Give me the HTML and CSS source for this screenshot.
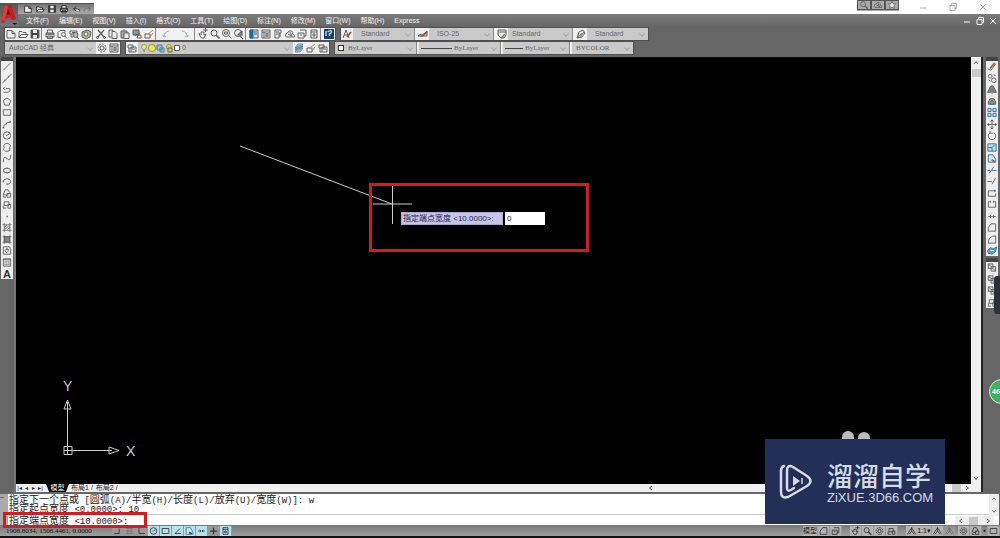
FILE: index.html
```html
<!DOCTYPE html>
<html lang="zh-CN">
<head>
<meta charset="utf-8">
<title>AutoCAD 经典</title>
<link rel="stylesheet" href="styles.css">
</head>
<body>
<svg class="defs" aria-hidden="true">
  <symbol id="new" viewBox="0 0 12 12"><path d="M2 2.500h5l3 3v4.500h-8z M7 2.500v3h3"/></symbol>
  <symbol id="open" viewBox="0 0 12 12"><path d="M2 9.500v-6h3l1 1h3v2M2 9.500l2-3h7l-2 3z"/></symbol>
  <symbol id="save" viewBox="0 0 12 12"><path d="M2 2h8v8h-8z" fill="#444"/><path d="M4 2h4v3h-4z M4 7h4v3h-4z" fill="#eee" stroke="none"/></symbol>
  <symbol id="print" viewBox="0 0 12 12"><path d="M3.500 5v-3h5v3M2 5h8v4h-8z M3.500 8v2.500h5v-2.500z"/><path d="M2 6h8" stroke-width="1.500"/></symbol>
  <symbol id="preview" viewBox="0 0 12 12"><path d="M5 9.500h-3v-5l2-2h5v2"/><circle cx="7.500" cy="6.500" r="2"/><path d="M9 8l2 2.500"/></symbol>
  <symbol id="publish" viewBox="0 0 12 12"><path d="M2 3h7v3h-7z M3 6v3h2"/><circle cx="7.500" cy="7" r="2.500" fill="#bbb"/><path d="M9 9l2 2M4 4.500h3"/></symbol>
  <symbol id="box3d" viewBox="0 0 12 12"><path d="M2 4l5-2 4 2-1 5-4 2-4-2z" fill="#bab78d"/><circle cx="6" cy="6" r="2" fill="#eee"/></symbol>
  <symbol id="cut" viewBox="0 0 12 12"><path d="M3 2l6 7M9 2l-6 7" stroke-width="1.300"/><circle cx="2.500" cy="9.500" r="1"/><circle cx="9.500" cy="9.500" r="1"/></symbol>
  <symbol id="copy" viewBox="0 0 12 12"><path d="M2 2h4v7h-4z"/><path d="M5 3.500h3l2 2v5h-5z" fill="#eee"/></symbol>
  <symbol id="paste" viewBox="0 0 12 12"><path d="M2 3h6v7h-6z" fill="#aaa"/><path d="M5 5h5v5.500h-5z" fill="#eee"/><path d="M4 2h2"/></symbol>
  <symbol id="match" viewBox="0 0 12 12"><path d="M2 2h6v5h-6z" fill="#8496a0"/><path d="M4 8l5-3M7 7h3v3h-4z" stroke="#75572b"/></symbol>
  <symbol id="blockedit" viewBox="0 0 12 12"><path d="M2 6h5v4h-5z"/><path d="M5 6l5-4M7 9l3-4" stroke="#b38b43"/></symbol>
  <symbol id="undo" viewBox="0 0 12 12"><path d="M3 6h5q3 0 2 3M3 6l3-3M3 6l3 2"/></symbol>
  <symbol id="redo" viewBox="0 0 12 12"><path d="M9 6h-5q-3 0-2 3M9 6l-3-3M9 6l-3 2"/></symbol>
  <symbol id="arcL" viewBox="0 0 12 12"><path d="M3 9q0-5 5-6M1.500 7l1.500 2 2-1" stroke="#aaa"/></symbol>
  <symbol id="arcR" viewBox="0 0 12 12"><path d="M8 9q0-5-5-6M6 8l2 1 1.500-2" stroke="#aaa"/></symbol>
  <symbol id="pan" viewBox="0 0 12 12"><path d="M2 5l1 3q1 3 4 2l2-4-2 1v-3h-3v3M6 2h5M8.500 0v4"/></symbol>
  <symbol id="zoom" viewBox="0 0 12 12"><circle cx="5" cy="5" r="3"/><path d="M7 7l3.500 3.500" stroke-width="1.700"/></symbol>
  <symbol id="zoomwin" viewBox="0 0 12 12"><circle cx="5" cy="5" r="3.500"/><path d="M3.500 4h3v2h-3z M7.500 7.500l3 3"/></symbol>
  <symbol id="zoomprev" viewBox="0 0 12 12"><circle cx="5" cy="5" r="3.500"/><path d="M7 8l3 3M9 3v4h-4l4-4" stroke-width="1.200"/></symbol>
  <symbol id="palette" viewBox="0 0 12 12"><path d="M2 2h8v8h-8z" fill="#ddd"/><path d="M2 2h3v8h-3z M6 4h3M6 6h3" fill="#26659a" stroke="#286b99"/></symbol>
  <symbol id="center" viewBox="0 0 12 12"><path d="M2 2h8v8h-8z M2 4h8M4 4v6M5 6h4M5 8h4M7 5v4"/></symbol>
  <symbol id="sheet" viewBox="0 0 12 12"><path d="M3 2h6v3h-2v5h-4z M4 4h3M4 6h2M8 5v4"/></symbol>
  <symbol id="markup" viewBox="0 0 12 12"><path d="M1.500 8q0-3 2-3q1-3 4-2q2 1 1 3q3 1 2 3h-8zM4 6l4 2M6 4l2 4"/></symbol>
  <symbol id="sheets" viewBox="0 0 12 12"><path d="M2 5h6v5h-6z M4 2h6v6h-2M4 7h2"/></symbol>
  <symbol id="calc" viewBox="0 0 12 12"><path d="M3 2h6v8h-6z M3 4h6M5 6h2v2h-2z"/></symbol>
  <symbol id="help" viewBox="0 0 12 12"><path d="M1.500 1.500h9v9h-9z" fill="#163f62" stroke="#163f62"/><path d="M4.500 4q4-3 4 0q0 1-2 2v2M3 3v5" stroke="#9cd8ef" stroke-width="1.500"/></symbol>
  <symbol id="astyle" viewBox="0 0 12 12"><path d="M2 10l3-8 3 8M3 7h4"/><path d="M6 9l4-5" stroke="#936137" stroke-width="2"/></symbol>
  <symbol id="dim" viewBox="0 0 12 12"><path d="M1 8h9M1 8l3-2v3M6 8l4-5v5"/><path d="M5 8l5-4" stroke="#9a4f34" stroke-width="2"/></symbol>
  <symbol id="tabstyle" viewBox="0 0 12 12"><path d="M2 2h8v5l-2 3h-3l-3-3zM2 4h8"/><path d="M5 10l4-4" stroke="#a46633" stroke-width="1.500"/></symbol>
  <symbol id="leader" viewBox="0 0 12 12"><path d="M2 10l2-6 4-2 2 3-3 4z M5 9l4-5"/><path d="M3 9l4-4" stroke="#936137"/></symbol>
  <symbol id="gear" viewBox="0 0 12 12"><circle cx="6" cy="6" r="4" stroke-dasharray="2 1"/><circle cx="6" cy="6" r="2"/></symbol>
  <symbol id="layers" viewBox="0 0 12 12"><path d="M2 3h5v3h-5z M3 6v4h2M5 5h5v5h-5z M6 7h3"/></symbol>
  <symbol id="layer2" viewBox="0 0 12 12"><path d="M2 6l3-4h5l-3 4z M2 8l3-4h5l-3 4z M2 10l3-4h5l-3 4z" fill="#b6d1df" stroke="#426d85" stroke-width=".7"/></symbol>
  <symbol id="line" viewBox="0 0 12 12"><path d="M2 10l8-8"/></symbol>
  <symbol id="xline" viewBox="0 0 12 12"><path d="M1 11l10-10"/><path d="M3 8h1M7 4h1" stroke-width="2"/></symbol>
  <symbol id="pline" viewBox="0 0 12 12"><path d="M2 9h5q4-1 2-4h-4M4 3l-2 2 2 1"/></symbol>
  <symbol id="poly" viewBox="0 0 12 12"><path d="M6 2l4 3-1.500 5h-5l-1.500-5z"/></symbol>
  <symbol id="rect" viewBox="0 0 12 12"><path d="M2 3h8v6h-8z"/></symbol>
  <symbol id="arc" viewBox="0 0 12 12"><path d="M2 10q1-6 8-7"/><path d="M2 9v1M5 5h1M9 3h1" stroke-width="2"/></symbol>
  <symbol id="circle" viewBox="0 0 12 12"><circle cx="6" cy="6" r="4"/><path d="M6 6l2.500-2M5 6h1"/></symbol>
  <symbol id="cloud" viewBox="0 0 12 12"><path d="M4 2q2-1 4 0q3 1 1 4q1 4-2 4q-3 1-4-1q-2-1 0-3q-2-2 1-4z"/></symbol>
  <symbol id="spline" viewBox="0 0 12 12"><path d="M2 10q0-8 4-4t4-4"/></symbol>
  <symbol id="ellipse" viewBox="0 0 12 12"><ellipse cx="6" cy="6" rx="4" ry="2.500"/><path d="M6 3v1M6 8v1M2 6h1M9 6h1" stroke-width="1.500"/></symbol>
  <symbol id="earc" viewBox="0 0 12 12"><path d="M2 6q0-3 4-3t4 3t-4 3M6 8v2M2 5v2"/></symbol>
  <symbol id="insert" viewBox="0 0 12 12"><path d="M2 7l2-5h3l2 3-3 3zM6 6h4v4h-4zM2 8v2h3"/></symbol>
  <symbol id="block" viewBox="0 0 12 12"><path d="M3 3h5v4h-5zM7 6h3v4h-3zM2 7v3h3"/></symbol>
  <symbol id="point" viewBox="0 0 12 12"><path d="M5.500 6h1.500" stroke-width="1.500"/></symbol>
  <symbol id="hatch" viewBox="0 0 12 12"><path d="M3 1v10M9 1v10M1 3h10M1 9h10M3 6l3-3M4 8l4-4M6 9l3-3" stroke-width=".8"/></symbol>
  <symbol id="gradient" viewBox="0 0 12 12"><path d="M3 3h6v6h-6z" fill="#888"/><path d="M1 3h10M1 9h10M3 1v10M9 1v10" stroke-width=".8"/></symbol>
  <symbol id="region" viewBox="0 0 12 12"><path d="M2 2h7l1 3v5h-8zM5 4q4 0 2 3t-3-1q0-2 3-1"/></symbol>
  <symbol id="table" viewBox="0 0 12 12"><path d="M2 2h8v8h-8zM2 3h8"/><path d="M2 5.500h8M2 8h8M5 4v6M8 4v6" stroke="#999"/></symbol>
  <symbol id="erase" viewBox="0 0 12 12"><path d="M2 9l3 1 5-7"/><path d="M4 8l5-6" stroke="#a56b3b" stroke-width="2"/></symbol>
  <symbol id="copyobj" viewBox="0 0 12 12"><circle cx="4" cy="3.500" r="2"/><circle cx="8" cy="8" r="2.500"/><path d="M8 2l2 1M2 7l2 2" stroke="#3788a5"/></symbol>
  <symbol id="mirror" viewBox="0 0 12 12"><path d="M5 2v7h-4zM7 2v7h4z" fill="#78929d"/><path d="M6 1v10"/></symbol>
  <symbol id="offset" viewBox="0 0 12 12"><path d="M2 9v-3l2-3h4l2 3v3zM4 9v-2l1-2h2l1 2v2z" fill="#8ba1a9"/></symbol>
  <symbol id="array" viewBox="0 0 12 12"><path d="M1.500 1.500h3.500v3.500h-3.500zM7 1.500h3.500v3.500h-3.500zM1.500 7h3.500v3.500h-3.500zM7 7h3.500v3.500h-3.500z" fill="#b8dded" stroke="#33748c"/></symbol>
  <symbol id="move" viewBox="0 0 12 12"><path d="M6 1v10M1 6h10M4.500 3l1.500-2 1.500 2M4.500 9l1.500 2 1.500-2M3 4.500l-2 1.500 2 1.500M9 4.500l2 1.500-2 1.500"/></symbol>
  <symbol id="rotate" viewBox="0 0 12 12"><path d="M4 3a4 4 0 1 0 4 0M4 1v2.500h3"/></symbol>
  <symbol id="scale" viewBox="0 0 12 12"><path d="M1.500 2h9v8h-9z" fill="#b8dded" stroke="#33748c"/><path d="M2 6h4v4M6 6l3-3" stroke="#33748c"/></symbol>
  <symbol id="stretch" viewBox="0 0 12 12"><path d="M2 10v-8h5l3 5v3z" fill="#d3e8f0" stroke="#33748c"/><path d="M6 7l3 2h-3z"/></symbol>
  <symbol id="trim" viewBox="0 0 12 12"><path d="M1 6h3M6 6h5" stroke="#33748c"/><path d="M3 9l5-7"/></symbol>
  <symbol id="extend" viewBox="0 0 12 12"><path d="M1 6h5" stroke="#33748c"/><path d="M6 9l4-7"/></symbol>
  <symbol id="breakpt" viewBox="0 0 12 12"><path d="M8 3h-6v6h8v-3"/><path d="M8 3h2" stroke="#25728b" stroke-width="2"/></symbol>
  <symbol id="break" viewBox="0 0 12 12"><path d="M4 3h-2v6h8v-6h-2"/><path d="M4 3h1M7 3h1" stroke-width="2"/></symbol>
  <symbol id="join" viewBox="0 0 12 12"><path d="M2 6h3M7 6h3M4 4.500l1.500 1.500-1.500 1.500M8 4.500l-1.500 1.500 1.500 1.500"/></symbol>
  <symbol id="chamfer" viewBox="0 0 12 12"><path d="M2 10v-4l3-4h5v8z"/></symbol>
  <symbol id="fillet" viewBox="0 0 12 12"><path d="M2 10q0-8 8-8v8z"/></symbol>
  <symbol id="explode" viewBox="0 0 12 12"><path d="M1 6l3-3 4 1 3-2-1 5-4 3-4-1z" fill="#54a5ba" stroke="#33748c"/><path d="M4 6h4" stroke="#ddd"/></symbol>
  <symbol id="order" viewBox="0 0 12 12"><path d="M2 2h5v5h-5zM5 5h5v5h-5z" fill="#ddd"/><path d="M2 2l3 3M7 7l3 3"/></symbol>
  <symbol id="snap" viewBox="0 0 12 12"><path d="M8 3v6h-6"/></symbol>
  <symbol id="grid" viewBox="0 0 12 12"><path d="M2 3h8M2 6h8M2 9h8M4 2v8M8 2v8" stroke="#777"/></symbol>
  <symbol id="ortho" viewBox="0 0 12 12"><path d="M3 2v7h7"/></symbol>
  <symbol id="angle" viewBox="0 0 12 12"><path d="M9 3l-6 6h7"/></symbol>
  <symbol id="star" viewBox="0 0 12 12"><path d="M6 1.500l1.300 3 3.200.3-2.400 2.200.8 3.200-2.900-1.700-2.900 1.700.8-3.200-2.400-2.200 3.200-.3z" fill="#eee"/></symbol>
  <symbol id="plus" viewBox="0 0 12 12"><path d="M6 2v8M2 6h8" stroke-width="1.500"/></symbol>
  <symbol id="min" viewBox="0 0 12 12"><path d="M3 7h6"/></symbol>
  <symbol id="max" viewBox="0 0 12 12"><path d="M3 4.500h5v5h-5zM4.500 4.500v-2h5v5h-1.500"/></symbol>
  <symbol id="close" viewBox="0 0 12 12"><path d="M3 3l6 6M9 3l-6 6"/></symbol>
  <symbol id="up" viewBox="0 0 12 12"><path d="M4 7l2-2.500 2 2.500"/></symbol>
  <symbol id="down" viewBox="0 0 12 12"><path d="M4 5l2 2.500 2-2.500"/></symbol>
  <symbol id="left" viewBox="0 0 12 12"><path d="M7 4l-2.500 2 2.500 2"/></symbol>
  <symbol id="right" viewBox="0 0 12 12"><path d="M5 4l2.500 2-2.500 2"/></symbol>
  <symbol id="scaleicon" viewBox="0 0 12 12"><path d="M1 10l5-8 5 8M3 10l3-4 3 4M6 2v4"/></symbol>
</svg>

<div class="app">
  <header class="titlebar">
    <button class="logo" aria-label="应用程序菜单"><svg viewBox="0 0 18 22"><path d="M1 18l4-17h6l5 14-4 1-2-3-5 2-1 4z" fill="#cf171d"/><path d="M5 1l3 1-3 14-4 2z" fill="#e23b36"/><path d="M8 5l2 5-3 1z" fill="#571012"/><path d="M12 19h5l-2 2z" fill="#111"/></svg></button>
    <div class="quick">
      <button aria-label="新建"><svg><use href="#new"/></svg></button><button aria-label="打开"><svg><use href="#open"/></svg></button><button aria-label="保存"><svg><use href="#save"/></svg></button><button aria-label="打印"><svg><use href="#print"/></svg></button><button aria-label="放弃"><svg><use href="#undo"/></svg></button><button class="faint" aria-label="重做"><svg><use href="#redo"/></svg></button>
    </div>
    <div class="info"><button aria-label="搜索"><svg><use href="#zoom"/></svg></button><button aria-label="通讯中心"><svg><use href="#markup"/></svg></button><button aria-label="收藏夹"><svg><use href="#star"/></svg></button></div>
    <div class="window"><button aria-label="最小化"><svg><use href="#min"/></svg></button><button aria-label="还原"><svg><use href="#max"/></svg></button><button aria-label="关闭"><svg><use href="#close"/></svg></button></div>
  </header>

  <nav class="menu">
    <a href="#">文件(F)</a><a href="#">编辑(E)</a><a href="#">视图(V)</a><a href="#">插入(I)</a><a href="#">格式(O)</a><a href="#">工具(T)</a><a href="#">绘图(D)</a><a href="#">标注(N)</a><a href="#">修改(M)</a><a href="#">窗口(W)</a><a href="#">帮助(H)</a><a href="#">Express</a>
    <div class="docwin"><button aria-label="最小化图形"><svg><use href="#min"/></svg></button><button aria-label="还原图形"><svg><use href="#max"/></svg></button><button aria-label="关闭图形"><svg><use href="#close"/></svg></button></div>
  </nav>

  <div class="toolbars">
    <div class="row">
      <div class="bar">
        <button aria-label="新建"><svg><use href="#new"/></svg></button><button aria-label="打开"><svg><use href="#open"/></svg></button><button aria-label="保存"><svg><use href="#save"/></svg></button><i></i>
        <button aria-label="打印"><svg><use href="#print"/></svg></button><button aria-label="预览"><svg><use href="#preview"/></svg></button><button aria-label="发布"><svg><use href="#publish"/></svg></button><button aria-label="三维"><svg><use href="#box3d"/></svg></button><i></i>
        <button aria-label="剪切"><svg><use href="#cut"/></svg></button><button aria-label="复制"><svg><use href="#copy"/></svg></button><button aria-label="粘贴"><svg><use href="#paste"/></svg></button><button aria-label="特性匹配"><svg><use href="#match"/></svg></button><button aria-label="块编辑器"><svg><use href="#blockedit"/></svg></button><i></i>
        <button class="wide" aria-label="放弃"><svg><use href="#arcL"/></svg></button><button class="wide" aria-label="重做"><svg><use href="#arcR"/></svg></button><i></i>
        <button aria-label="平移"><svg><use href="#pan"/></svg></button><button aria-label="缩放"><svg><use href="#zoom"/></svg></button><button aria-label="窗口缩放"><svg><use href="#zoomwin"/></svg></button><button aria-label="上一个"><svg><use href="#zoomprev"/></svg></button><i></i>
        <button aria-label="特性"><svg><use href="#palette"/></svg></button><button aria-label="设计中心"><svg><use href="#center"/></svg></button><button aria-label="工具选项板"><svg><use href="#sheet"/></svg></button><button aria-label="标记集"><svg><use href="#markup"/></svg></button><button aria-label="图纸集"><svg><use href="#sheets"/></svg></button><button aria-label="计算器"><svg><use href="#calc"/></svg></button><i></i>
        <button aria-label="帮助"><svg><use href="#help"/></svg></button>
      </div>
      <div class="bar">
        <button aria-label="文字样式"><svg><use href="#astyle"/></svg></button><label class="combo w60"><select class="in8" aria-label="文字样式"><option>Standard</option></select></label><i></i>
        <button aria-label="标注样式"><svg><use href="#dim"/></svg></button><label class="combo w64"><select class="in8" aria-label="标注样式"><option>ISO-25</option></select></label><i></i>
        <button aria-label="表格样式"><svg><use href="#tabstyle"/></svg></button><label class="combo w64"><select aria-label="表格样式"><option>Standard</option></select></label><i></i>
        <button aria-label="引线样式"><svg><use href="#leader"/></svg></button><label class="combo w60"><select class="in8" aria-label="引线样式"><option>Standard</option></select></label>
      </div>
    </div>
    <div class="row">
      <div class="bar"><label class="combo w90"><select aria-label="工作空间"><option>AutoCAD 经典</option></select></label><button aria-label="工作空间设置"><svg><use href="#gear"/></svg></button><button aria-label="我的工作空间"><svg><use href="#center"/></svg></button></div>
      <div class="bar"><button aria-label="图层特性"><svg><use href="#layers"/></svg></button>
        <label class="combo w156"><svg class="marks" viewBox="0 0 42 12"><circle cx="6" cy="5" r="2.500" fill="#e9e878" stroke="#a5a560"/><path d="M6 8v2"/><circle cx="14" cy="6" r="3.500" fill="#eced46" stroke="#99983e"/><path d="M19 3h5v5h-5zM22 6h4v4h-4z" fill="#96bed6" stroke="#568197"/><circle cx="31" cy="5" r="2.500" fill="#dfdb48" stroke="#98963c"/><path d="M30 6h4v4h-4z" fill="#d6d450"/><path d="M36.500 3.500h5v5h-5z" fill="#fff"/></svg><select class="layer" aria-label="图层"><option>0</option></select></label>
        <button aria-label="置为当前"><svg><use href="#layer2"/></svg></button><button aria-label="上一个图层"><svg><use href="#blockedit"/></svg></button><button aria-label="图层状态"><svg><use href="#layers"/></svg></button></div>
      <div class="bar props">
        <label class="combo w80"><span class="swatch"></span><select class="color" aria-label="颜色"><option>ByLayer</option></select></label><i></i>
        <label class="combo w80"><span class="stroke long"></span><select class="type" aria-label="线型"><option>ByLayer</option></select></label><i></i>
        <label class="combo w66"><span class="stroke"></span><select class="weight" aria-label="线宽"><option>ByLayer</option></select></label><i></i>
        <label class="combo w60"><select aria-label="打印样式"><option>BYCOLOR</option></select></label>
      </div>
    </div>
  </div>

  <main class="workspace">
    <aside class="side"><div class="grip"></div><div class="tools">
      <button aria-label="直线"><svg><use href="#line"/></svg></button><button aria-label="构造线"><svg><use href="#xline"/></svg></button><button aria-label="多段线"><svg><use href="#pline"/></svg></button><button aria-label="多边形"><svg><use href="#poly"/></svg></button><button aria-label="矩形"><svg><use href="#rect"/></svg></button><button aria-label="圆弧"><svg><use href="#arc"/></svg></button><button aria-label="圆"><svg><use href="#circle"/></svg></button><button aria-label="修订云线"><svg><use href="#cloud"/></svg></button><button aria-label="样条曲线"><svg><use href="#spline"/></svg></button><button aria-label="椭圆"><svg><use href="#ellipse"/></svg></button><button aria-label="椭圆弧"><svg><use href="#earc"/></svg></button><button aria-label="插入块"><svg><use href="#insert"/></svg></button><button aria-label="创建块"><svg><use href="#block"/></svg></button><button aria-label="点"><svg><use href="#point"/></svg></button><button aria-label="图案填充"><svg><use href="#hatch"/></svg></button><button aria-label="渐变色"><svg><use href="#gradient"/></svg></button><button aria-label="面域"><svg><use href="#region"/></svg></button><button aria-label="表格"><svg><use href="#table"/></svg></button><button class="mtext" aria-label="多行文字">A</button>
    </div></aside>

    <section class="drawing">
      <div class="view">
        <div class="canvas">
          <svg class="polyline" viewBox="0 0 400 170"><path d="M224 88L376 146M357 146h39M376.500 128v38"/></svg>
          <svg class="ucs" viewBox="0 0 90 90"><path d="M10.500 77v-47M14 78.500h41M7 74.500h8v8h-8zM10.500 74v8M7 78.500h8M10.500 28l3.500 9h-7zM62 78.500l-10-3.500v7z"/><text x="6" y="19">Y</text><text x="69" y="84">X</text></svg>
          <form class="prompt"><label for="width">指定端点宽度 &lt;10.0000&gt;:</label><input id="width" value="0"></form>
          <div class="callout"></div>
          <span class="blob first"></span><span class="blob"></span>
        </div>
        <div class="vscroll"><button aria-label="向上滚动"><svg><use href="#up"/></svg></button><span class="thumb"></span><button class="end" aria-label="向下滚动"><svg><use href="#down"/></svg></button></div>
      </div>
      <div class="tabs"><button aria-label="首个布局">|◂</button><button aria-label="上一布局">◂</button><button aria-label="下一布局">▸</button><button aria-label="末个布局">▸|</button><a href="#" class="active">模型</a><a href="#">布局1</a><span>/</span><a href="#">布局2</a><span>/</span><div class="hscroll"><button aria-label="向左滚动"><svg><use href="#left"/></svg></button><span class="thumb"></span><button aria-label="向右滚动"><svg><use href="#right"/></svg></button></div></div>
    </section>

    <aside class="side rightside"><div class="grip"></div><div class="tools">
      <button aria-label="删除"><svg><use href="#erase"/></svg></button><button aria-label="复制"><svg><use href="#copyobj"/></svg></button><button aria-label="镜像"><svg><use href="#mirror"/></svg></button><button aria-label="偏移"><svg><use href="#offset"/></svg></button><button aria-label="阵列"><svg><use href="#array"/></svg></button><button aria-label="移动"><svg><use href="#move"/></svg></button><button aria-label="旋转"><svg><use href="#rotate"/></svg></button><button aria-label="缩放"><svg><use href="#scale"/></svg></button><button aria-label="拉伸"><svg><use href="#stretch"/></svg></button><button aria-label="修剪"><svg><use href="#trim"/></svg></button><button aria-label="延伸"><svg><use href="#extend"/></svg></button><button aria-label="打断于点"><svg><use href="#breakpt"/></svg></button><button aria-label="打断"><svg><use href="#break"/></svg></button><button aria-label="合并"><svg><use href="#join"/></svg></button><button aria-label="倒角"><svg><use href="#chamfer"/></svg></button><button aria-label="圆角"><svg><use href="#fillet"/></svg></button><button aria-label="分解"><svg><use href="#explode"/></svg></button>
    </div><div class="grip second"></div><div class="tools"><button aria-label="前置"><svg><use href="#order"/></svg></button><button aria-label="后置"><svg><use href="#order"/></svg></button><button aria-label="置于对象之上"><svg><use href="#order"/></svg></button><button aria-label="置于对象之下"><svg><use href="#block"/></svg></button></div><span class="handle"></span><span class="ball">46</span></aside>
  </main>

  <section class="command">
    <div class="cmdgrip">–</div>
    <div class="history">
      <p>指定下一个点或<code> [</code>圆弧<code>(A)/</code>半宽<code>(H)/</code>长度<code>(L)/</code>放弃<code>(U)/</code>宽度<code>(W)]: w</code></p>
      <p>指定起点宽度<code> &lt;0.0000&gt;: 10</code></p>
      <p class="current">指定端点宽度<code> &lt;10.0000&gt;:</code></p>
      <div class="cmdcallout"></div>
    </div>
    <div class="cmdscroll"><button aria-label="历史向上"><svg><use href="#up"/></svg></button><button aria-label="历史向下"><svg><use href="#down"/></svg></button></div>
    <div class="cmdh"><button aria-label="命令向左"><svg><use href="#left"/></svg></button><span class="thumb"></span><button aria-label="命令向右"><svg><use href="#right"/></svg></button></div>
  </section>

  <footer class="status">
    <span class="coords">1908.8034, 1506.4461, 0.0000</span>
    <div class="toggles"><button aria-label="捕捉"><svg><use href="#snap"/></svg></button><button aria-label="栅格"><svg><use href="#grid"/></svg></button><button aria-label="正交"><svg><use href="#ortho"/></svg></button><button class="on" aria-label="极轴"><svg><use href="#circle"/></svg></button><button class="on" aria-label="对象捕捉"><svg><use href="#rect"/></svg></button><button class="on" aria-label="对象追踪"><svg><use href="#angle"/></svg></button><button class="on" aria-label="动态UCS"><svg><use href="#stretch"/></svg></button><button class="on" aria-label="动态输入"><svg><use href="#join"/></svg></button><button aria-label="线宽"><svg><use href="#plus"/></svg></button><button class="on" aria-label="快捷特性"><svg><use href="#calc"/></svg></button></div>
    <div class="right"><button class="model">模型</button><button aria-label="布局"><svg><use href="#chamfer"/></svg></button><button aria-label="快速查看"><svg><use href="#sheets"/></svg></button><span class="gap"></span><button aria-label="平移视图"><svg><use href="#pan"/></svg></button><button aria-label="缩放视图"><svg><use href="#zoom"/></svg></button><button aria-label="控制盘"><svg><use href="#gear"/></svg></button><button aria-label="运动"><svg><use href="#block"/></svg></button><span class="gap"></span><button class="ratio"><svg><use href="#scaleicon"/></svg>1:1▾</button><button aria-label="注释可见"><svg><use href="#scaleicon"/></svg></button><button class="faint" aria-label="自动缩放"><svg><use href="#scaleicon"/></svg></button><span class="gap small"></span><button aria-label="切换空间"><svg><use href="#gear"/></svg></button><button aria-label="锁定"><svg><use href="#insert"/></svg></button><button class="dot" aria-label="状态菜单">▪</button><button aria-label="全屏"><svg><use href="#rect"/></svg></button></div>
  </footer>
  <div class="base"></div>

  <aside class="brand">
    <svg viewBox="0 0 36 38"><g fill="none" stroke="#d5dae3" stroke-width="2.500" stroke-linecap="round" stroke-linejoin="round"><path d="M2 8v21q0 7 7 5l19-11q7-5 0-10l-14-9q-6-3-6 4v17q0 4 4 2l3-2"/><path d="M5 3q-3 1-3 5"/></g><path d="M14 13l7 5-7 5z" fill="#d5dae3"/><path d="M23 15v6" stroke="#d5dae3" stroke-width="1.500"/></svg>
    <div><strong>溜溜自学</strong><span>ZiXUE.3D66.COM</span></div>
  </aside>
</div>
</body>
</html>
```

FILE: styles.css
```css
* { box-sizing: border-box; }
body { margin: 0; background: #666; font-family: "Liberation Sans", "Noto Sans CJK SC", sans-serif; font-size: 7px; line-height: 12px; color: #333; }
button, select, input { font: inherit; color: inherit; margin: 0; padding: 0; border: 0; border-radius: 0; background: transparent; }
button { display: flex; align-items: center; justify-content: center; flex: none; width: 12px; height: 12px; }
svg { display: block; width: 12px; height: 12px; fill: none; stroke: #606060; stroke-width: 1; }
a { color: inherit; text-decoration: none; }
.defs { position: absolute; width: 0; height: 0; }
.app { position: relative; display: flex; flex-direction: column; min-height: 100vh; }
.faint { opacity: .35; }

.titlebar { position: relative; display: flex; height: 14px; background: #fff; padding-left: 18px; }
.logo { position: absolute; left: 0; top: 3px; z-index: 2; width: 18px; height: 23px; background: linear-gradient(#555, #777); }
.logo svg { width: 18px; height: 22px; stroke: none; }
.quick { display: flex; align-self: flex-end; height: 11px; width: 76px; padding-left: 4px; background: linear-gradient(#777, #aaa); border-top: 1px solid #555; }
.quick button { height: 10px; }
.quick svg { height: 10px; stroke: #222; fill: #eee; }
.info { display: flex; margin-left: auto; height: 11px; background: #aaa; }
.info button { width: 14px; height: 10px; border: 1px solid #555; }
.info svg { height: 10px; }
.window { display: flex; gap: 18px; margin: 1px 11px 0 18px; }
.window svg { stroke: #aaa; }

.menu { display: flex; align-items: center; gap: 10px; height: 13px; padding-left: 26px; background: linear-gradient(#7b7b7b, #666); color: #f5f5f5; }
.menu a { white-space: nowrap; }
.docwin { display: flex; gap: 1px; margin-left: auto; padding-right: 1px; }
.docwin svg { stroke: #fff; }

.toolbars { display: flex; flex-direction: column; gap: 2px; height: 30px; padding: 1px 0 0 5px; background: #666; }
.row { display: flex; gap: 6px; }
.bar { display: flex; height: 12px; background: #f0f0f0; outline: 1px solid #505050; }
.bar i { width: 3px; border-left: 1px solid #888; flex: none; }
.bar .wide { width: 18px; }
.combo { position: relative; display: flex; background: #c9c9c9; height: 12px; color: #666; }
.combo::after { content: ""; position: absolute; right: 4px; top: 4px; width: 3px; height: 3px; border: solid #aaa; border-width: 0 1px 1px 0; rotate: 45deg; }
.combo select { appearance: none; width: 100%; height: 12px; padding-left: 4px; outline: 0; }
.combo .in8 { padding-left: 8px; }
.w60 { width: 61px; } .w64 { width: 64px; } .w66 { width: 66px; } .w80 { width: 81px; } .w90 { width: 91px; } .w156 { width: 155px; }
.marks { width: 42px; flex: none; }
.combo .layer { flex: 1; min-width: 0; padding-left: 2px; }
.swatch { flex: none; width: 6px; height: 6px; margin: 3px 0 0 3px; border: 1px solid #333; background: #fff; }
.stroke { flex: none; width: 18px; height: 1px; margin: 6px 0 0 2px; background: #444; }
.stroke.long { width: 31px; }
.props select { font-family: "Liberation Serif", serif; }
.combo .type, .combo .weight { padding-left: 2px; }

.workspace { flex: 1; display: flex; min-height: 0; background: #666; }
.side { position: relative; width: 16px; padding: 0 2px 0 1px; flex: none; border-right: 2px solid #777; }
.grip { height: 4px; background: #444; width: 12px; }
.tools { width: 12px; background: #eee; }
.tools button { height: 11px; }
.tools button:nth-child(2n) { height: 12px; }
.tools svg { height: 11px; }
.tools .mtext { height: 11px; font-size: 11px; font-weight: bold; }
.drawing { flex: 1; display: flex; flex-direction: column; min-width: 0; }
.view { flex: 1; display: flex; }
.canvas { position: relative; flex: 1; overflow: hidden; background: #000; border-top: 1px solid #111; }
.canvas svg { position: absolute; stroke: #ccc; }
.canvas .polyline { left: 0; top: 0; width: 400px; height: 170px; }
.canvas .ucs { left: 41px; bottom: 22px; width: 90px; height: 90px; }
.ucs text { fill: #ccc; stroke: none; font-size: 14px; }
.prompt { position: absolute; left: 385px; top: 154px; display: flex; gap: 2px; font-size: 8px; }
.prompt label { width: 102px; height: 13px; padding: 0 1px; border: 1px solid #aaa7cf; background: #c7c4e8; color: #25254a; white-space: nowrap; }
.prompt input { width: 40px; height: 13px; padding-left: 2px; background: #fff; color: #222; }
.callout { position: absolute; left: 353px; top: 125px; width: 220px; height: 69px; border: 3px solid #d51a20; }
.blob { position: absolute; right: 101px; bottom: 39px; width: 12px; height: 13px; border-radius: 6px; background: #bbb; }
.blob.first { right: 117px; bottom: 40px; }
.vscroll { display: flex; flex-direction: column; align-items: center; width: 10px; background: #f0f0f0; }
.thumb { width: 9px; height: 8px; background: #c9c9c9; }
.vscroll .end { margin-top: auto; }
.tabs { display: flex; align-items: center; height: 8px; background: #f0f0f0; line-height: 8px; color: #222; }
.tabs > button { width: 7px; height: 8px; font-size: 6px; }
.tabs .active { width: 23px; margin: 0 2px; background: #000; color: #fff; text-align: center; clip-path: polygon(0 0, 100% 0, 86% 100%, 14% 100%); }
.tabs span { margin: 0 3px 0 2px; }
.hscroll { display: flex; align-items: center; width: 34%; height: 8px; margin: 0 8px 0 auto; }
.hscroll .thumb { margin: 0 0 0 auto; }
.rightside { width: 19px; padding-left: 5px; border: 0; box-shadow: inset 2px 0 #222; overflow: hidden; }
.second { margin-top: 2px; }
.handle { position: absolute; top: 219px; right: 0; width: 6px; height: 38px; border-radius: 3px 0 0 3px; background: #26313b; }
.ball { position: absolute; top: 322px; right: -14px; width: 25px; height: 25px; padding-left: 2px; border: 1px solid #d7f4dc; border-radius: 13px; background: #39b55b; color: #fff; line-height: 23px; font-weight: bold; }

.command { position: relative; display: grid; grid-template-columns: 8px 1fr 10px; grid-template-rows: 22px 9px; margin: 2px 1px 0 0; background: #fff; }
.cmdgrip { grid-row: 1 / 3; background: #aaa; line-height: 6px; }
.history { position: relative; grid-row: 1 / 3; padding: 0 0 0 1px; font: 10px/9px "Noto Sans CJK SC", sans-serif; color: #222; }
.history p { margin: 0; height: 9px; white-space: pre; }
.history code { font: 9px/9px "Liberation Mono", monospace; }
.history .current { height: 11px; margin-top: 2px; border-top: 1px solid #ccc; }
.cmdcallout { position: absolute; left: -5px; top: 18px; width: 144px; height: 16px; border: 3px solid #d51a20; z-index: 2; }
.cmdscroll { display: flex; flex-direction: column; justify-content: space-between; background: #eee; }
.cmdscroll button { width: 10px; height: 10px; }
.cmdh { position: absolute; right: 5px; bottom: 0; display: flex; align-items: center; gap: 2px; width: 39px; height: 9px; background: #eee; }
.cmdh button:last-child { margin-left: auto; }

.status { display: flex; align-items: center; height: 11px; background: linear-gradient(#777, #a0a0a0); color: #111; }
.coords { width: 108px; padding-left: 6px; font-family: "Liberation Serif", serif; white-space: nowrap; }
.toggles { display: flex; margin-left: 4px; }
.status button { height: 10px; }
.status svg { height: 10px; stroke: #333; }
.toggles button { background: #999; }
.toggles .on { background: #b8e0ed; }
.toggles button, .right button { border-right: 1px solid #999; }
.right { display: flex; margin-left: auto; }
.right button { background: #b3b3b3; }
.right .model { width: 15px; }
.right .ratio { width: 26px; }
.right .dot { width: 6px; background: transparent; }
.gap { width: 8px; }
.gap.small { width: 2px; }
.base { height: 2px; background: #111; }

.brand { position: absolute; right: 55px; bottom: 14px; z-index: 5; display: flex; align-items: center; gap: 12px; width: 180px; height: 85px; padding-left: 14px; background: #223058; color: #d5dae3; }
.brand svg { width: 36px; height: 38px; stroke: none; }
.brand div { display: flex; flex-direction: column; }
.brand strong { font: 500 26px/32px "Noto Sans CJK SC", sans-serif; white-space: nowrap; }
.brand span { font: 13px/14px "Liberation Sans", sans-serif; }
```
